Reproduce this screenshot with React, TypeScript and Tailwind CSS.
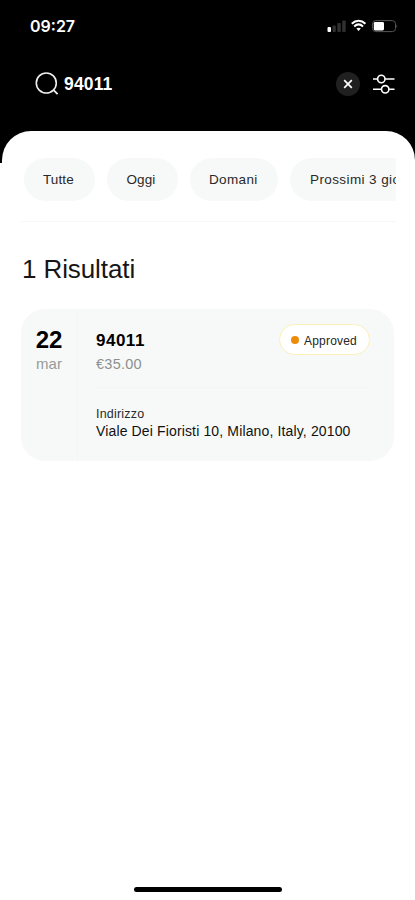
import React from "react";

function StatusIcons() {
  return (
    <svg width="71" height="16" viewBox="0 0 71 16" fill="none">
      <rect x="0.5" y="9" width="3.5" height="5" rx="1" fill="#fff" />
      <rect x="5.5" y="7.5" width="3.3" height="6.5" rx="1" fill="#303030" />
      <rect x="10.3" y="5" width="3.5" height="9" rx="1" fill="#303030" />
      <rect x="15.2" y="2.5" width="3.5" height="11.5" rx="1" fill="#303030" />
      <path d="M24.8 5.7C28.8 1.8 34.4 1.8 38.4 5.7" stroke="#fff" strokeWidth="2.1" />
      <path d="M27.2 8.4C29.9 5.9 33.3 5.9 36 8.4" stroke="#fff" strokeWidth="2" />
      <path d="M29.4 10.5Q31.6 8.9 33.8 10.5L31.6 13Z" fill="#fff" />
      <rect x="45.5" y="2.6" width="23" height="11" rx="3.2" stroke="#555" />
      <rect x="46.8" y="3.9" width="10.2" height="8.5" rx="1.4" fill="#fff" />
      <path d="M69.6 6.2Q71 8 69.6 10Z" fill="#777" />
    </svg>
  );
}

function SearchIcon() {
  return (
    <svg width="24" height="24" viewBox="0 0 24 24" fill="none" stroke="#eeeeee" strokeWidth="1.6">
      <circle cx="11.3" cy="11" r="10" />
      <path d="M18.6 18.2L22.6 22.2" strokeWidth="1.8" />
    </svg>
  );
}

function FiltersIcon() {
  return (
    <svg width="24" height="22" viewBox="0 0 24 22" fill="none" stroke="#fff" strokeWidth="1.6">
      <path d="M1 6H5.4M13.2 6H22.5M1 16.3H9.3M17.1 16.3H22.5" />
      <circle cx="9.3" cy="6" r="3.7" />
      <circle cx="13.2" cy="16.3" r="3.7" />
    </svg>
  );
}

function Chip({ label, className }: { label: string; className: string }) {
  return (
    <div className={`flex h-[43px] shrink-0 items-center rounded-full bg-[#f7f9f8] pt-[2px] text-[13.5px] whitespace-nowrap text-[#292929] ${className}`}>
      {label}
    </div>
  );
}

function ResultCard() {
  return (
    <div className="mt-[24px] ml-[21px] flex h-[152px] w-[373px] rounded-[24px] bg-[#f7f9f8]">
      <div className="flex w-[57px] flex-col items-center border-r border-[#f3f6f5] pt-[17px]">
        <div className="text-[24px] leading-[28px] font-bold text-black">22</div>
        <div className="mt-[1px] text-[15px] leading-[18px] tracking-[0.1px] text-[#97999a]">mar</div>
      </div>
      <div className="flex-1 pr-[24px] pl-[18px]">
        <div className="flex h-[79px] justify-between border-b border-[#f3f6f5] pt-[15px]">
          <div className="pt-[7px]">
            <div className="text-[17px] leading-[20px] font-bold tracking-[0.5px] text-black">94011</div>
            <div className="mt-[4px] text-[14.5px] leading-[18px] tracking-[0.25px] text-[#8d8f90]">€35.00</div>
          </div>
          <div className="flex h-[31px] w-[91px] items-center rounded-full border border-[#fbf0b9] bg-white pl-[11px] text-[12px] text-[#252525]">
            <span className="mr-[5px] size-[8px] rounded-full bg-[#ed8c0b]" />
            <span className="pt-[2px] tracking-[0.2px]">Approved</span>
          </div>
        </div>
        <div className="pt-[18px]">
          <div className="text-[12.5px] leading-[16px] tracking-[0.2px] text-[#292929]">Indirizzo</div>
          <div className="text-[14px] leading-[18px] tracking-[0.14px] whitespace-nowrap text-[#111]">
            Viale Dei Fioristi 10, Milano, Italy, 20100
          </div>
        </div>
      </div>
    </div>
  );
}

export default function App() {
  return (
    <div className="flex h-[900px] w-[415px] flex-col overflow-hidden bg-white font-['Liberation_Sans',Arial,sans-serif]">
      <div className="h-[163px] shrink-0 bg-black text-white">
        <div className="flex h-[51px] items-center justify-between pr-[17px] pl-[30px]">
          <div className="font-['Inter',sans-serif] text-[16px] font-semibold">09:27</div>
          <StatusIcons />
        </div>
        <div className="flex h-[66px] items-center pr-[19px] pl-[35px]">
          <SearchIcon />
          <div className="ml-[5px] flex-1 text-[17.5px] font-bold tracking-[0.15px]">94011</div>
          <div className="mr-[12px] flex size-[24px] items-center justify-center rounded-full bg-[#202020]">
            <svg width="10" height="10" viewBox="0 0 10 10" stroke="#fff" strokeWidth="1.7">
              <path d="M1.2 1.2L8.8 8.8M8.8 1.2L1.2 8.8" />
            </svg>
          </div>
          <FiltersIcon />
        </div>
      </div>
      <div className="ml-[2px] -mt-[32px] flex-1 rounded-t-[29px] bg-white">
        <div className="-ml-[2px] flex h-full flex-col">
          <div className="mr-[19px] ml-[21px] flex h-[91px] gap-[12px] overflow-hidden border-b border-[#f7f7f7] pt-[27px] pl-[3px]">
            <Chip label="Tutte" className="w-[71px] pl-[19px] tracking-[0.1px]" />
            <Chip label="Oggi" className="w-[71px] pl-[19.5px] tracking-[0.1px]" />
            <Chip label="Domani" className="w-[88px] pl-[19px] tracking-[0.35px]" />
            <Chip label="Prossimi 3 giorni" className="w-[144px] pl-[20px] tracking-[0.4px]" />
          </div>
          <h1 className="mt-[31px] ml-[22px] text-[26px] leading-[32px] font-normal tracking-[-0.1px] text-[#161616]">1 Risultati</h1>
          <ResultCard />
          <div className="mx-auto mt-auto mb-[8px] h-[5px] w-[148px] rounded-full bg-black" />
        </div>
      </div>
    </div>
  );
}
